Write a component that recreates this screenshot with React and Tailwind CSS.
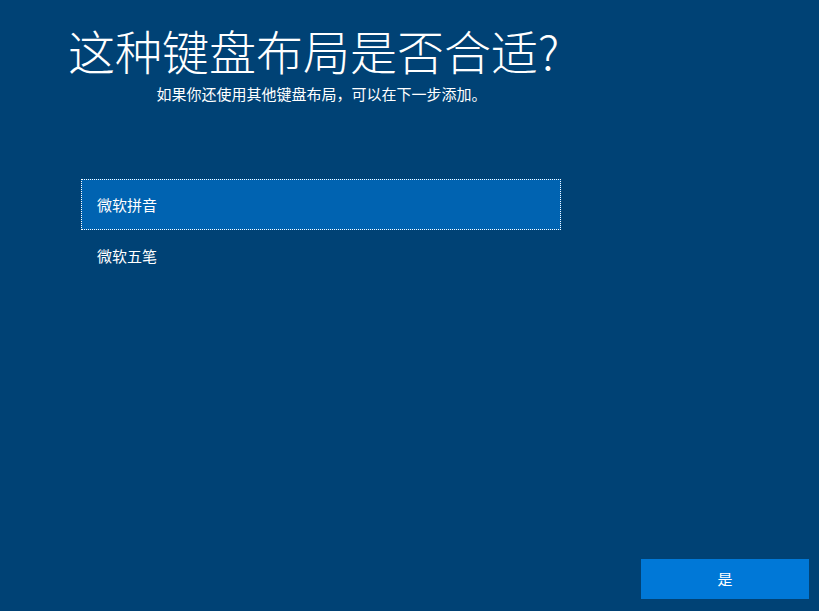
export default function App() {
  const font = { fontFamily: '"Noto Sans CJK SC", "Noto Sans", sans-serif' };
  return (
    <div className="w-full h-[611px] bg-[#004275] text-white flex flex-col overflow-hidden" style={font}>
      <div className="pl-[68px] pt-[25px]">
        <div className="inline-flex flex-col items-center">
          <h1 className="text-[47px] leading-[50px] font-light">这种键盘布局是否合适?</h1>
          <p className="text-[15px] leading-[20px] mt-[9px] pl-[16px]">如果你还使用其他键盘布局，可以在下一步添加。</p>
        </div>
      </div>
      <div className="pl-[81px] pt-[75px]">
        <div className="w-[480px] h-[51px] bg-[#0063b1] border border-dotted border-white flex items-center pl-[15px] pt-[1px] text-[15px]">微软拼音</div>
        <div className="w-[480px] h-[52px] flex items-center pl-[16px] pt-[1px] text-[15px]">微软五笔</div>
      </div>
      <div className="flex-1" />
      <div className="flex justify-end pr-[10px] pb-[12px]">
        <button className="w-[168px] h-[40px] bg-[#0078d7] text-white text-[15px] flex items-center justify-center">是</button>
      </div>
    </div>
  );
}
